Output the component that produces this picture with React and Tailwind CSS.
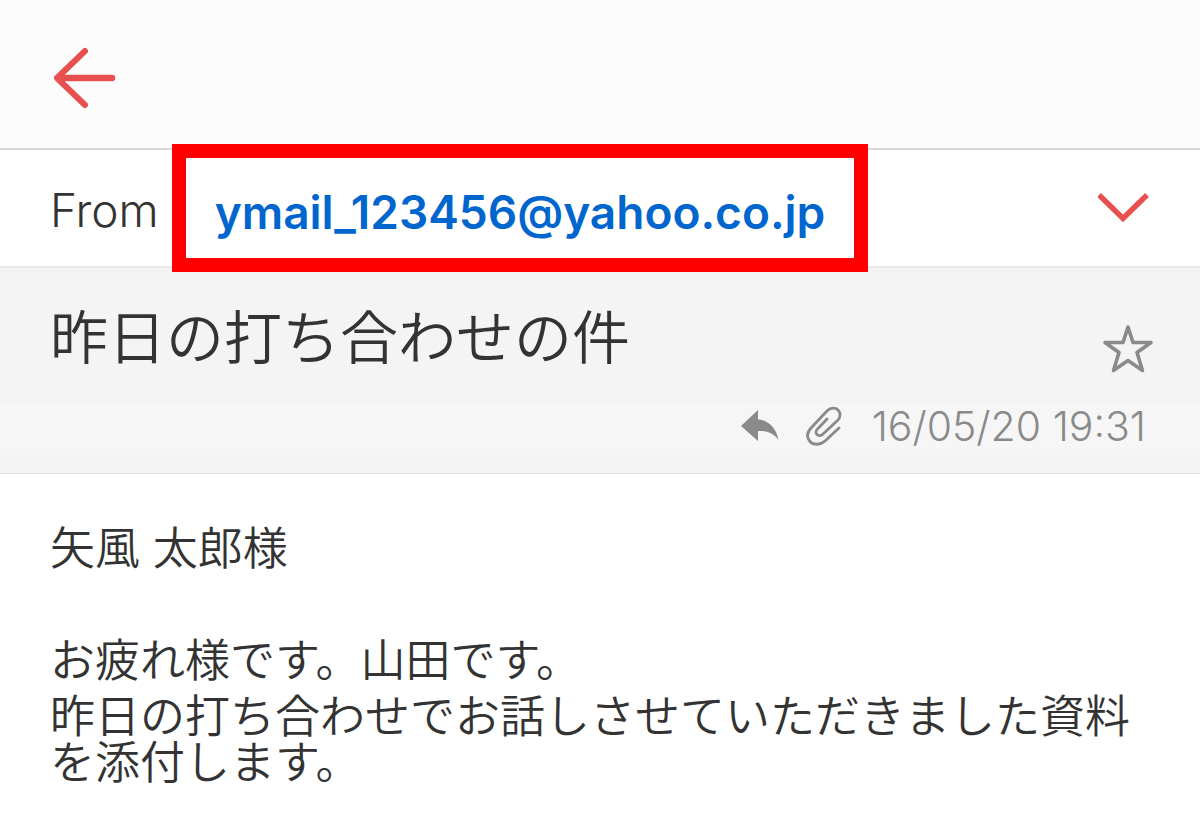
const PARAGRAPHS = [
  '矢風 太郎様',
  '',
  'お疲れ様です。山田です。',
  '昨日の打ち合わせでお話しさせていただきました資料を添付します。',
];

export default function App() {
  return (
    <div className="min-h-screen bg-white text-[#333] font-['Inter','Noto_Sans_CJK_JP',sans-serif] font-[350]">
      <TopBar />
      <Sender address="ymail_123456@yahoo.co.jp" />
      <Subject title="昨日の打ち合わせの件" date="16/05/20 19:31" />
      <main className="px-[50px] pt-[52px] pb-6 space-y-[10px] text-[45px] leading-[46px]">
        {PARAGRAPHS.map((text, i) => (
          <p key={i} className="min-h-[46px] break-all">{text}</p>
        ))}
      </main>
    </div>
  );
}

function TopBar() {
  return (
    <header className="flex items-center h-[150px] px-[52px] pt-2 bg-[#fcfcfc] border-b-2 border-[#d9d9d9]">
      <button type="button" aria-label="Back">
        <svg width="64" height="64" viewBox="0 0 64 64" fill="none" stroke="#e85050" strokeLinecap="round">
          <path d="M33 5 5 32l28 27" strokeWidth="6" strokeLinejoin="round" />
          <path d="M7 32h53" strokeWidth="6.5" />
        </svg>
      </button>
    </header>
  );
}

function Sender({ address }) {
  return (
    <section className="flex items-center h-[118px] px-[50px] border-b-2 border-[#e9e9e9]">
      <span className="w-[122px] pt-1 text-[46px] leading-[56px] font-light">From</span>
      <a href={`mailto:${address}`} className="relative z-10 -my-2 flex items-center justify-center w-[696px] h-[128px] shrink-0 pt-2 border-[14px] border-[#f00] text-[46px] leading-[56px] font-semibold text-[#0066cd]">
        {address}
      </a>
      <button type="button" aria-label="Show details" className="ml-auto">
        <svg width="52" height="30" viewBox="0 0 52 30" fill="none" stroke="#e85050" strokeWidth="5.5">
          <path d="M1 2 25 25.500 49 2" />
        </svg>
      </button>
    </section>
  );
}

function Subject({ title, date }) {
  return (
    <section className="pb-[19px] bg-[#f4f4f4] border-b border-[#dedede]">
      <div className="flex items-start justify-between h-[137px] pl-[50px] pr-[46px] pt-[38px]">
        <h1 className="text-[58px] leading-[64px] font-[350]">{title}</h1>
        <button type="button" aria-label="Star" className="mt-[18px]">
          <svg width="52" height="50" viewBox="0 0 52 50" fill="none" stroke="#8a8a8a" strokeWidth="3.6" strokeLinejoin="round">
            <path d="M26 3l5 15.500h18L35 28.500 40.500 46.500 26 36.500 11.500 46.500 17 28.500 3 18.500h18z" />
          </svg>
        </button>
      </div>
      <div className="flex items-center justify-end h-[49px] pb-2 pr-[54px] bg-[#f6f6f6] text-[#8a8a8a]">
        <svg width="40" height="34" viewBox="0 0 40 34" fill="currentColor" className="mr-[26px]">
          <path d="M1 17 18 1v9.500c9 0 18.500 8 20.500 20.500C34 24 26 21.500 18 22v10z" />
        </svg>
        <svg width="36" height="40" viewBox="0 0 36 40" fill="none" stroke="currentColor" strokeWidth="2.8" strokeLinecap="round" className="mr-[30px]">
          <path d="M33 22 19 35C14 39.500 7 39 4 35.500 .5 31.500 1 26.500 5 22L20 6C24 1.500 29 1 32 4c3 3 2.500 7.500-.5 10.500L17 28c-2 2-4.500 2-6 .5s-1-4 .5-5.500L21 13" />
        </svg>
        <time dateTime="2016-05-20T19:31" className="text-[41px] leading-[48px] font-light">{date}</time>
      </div>
    </section>
  );
}
